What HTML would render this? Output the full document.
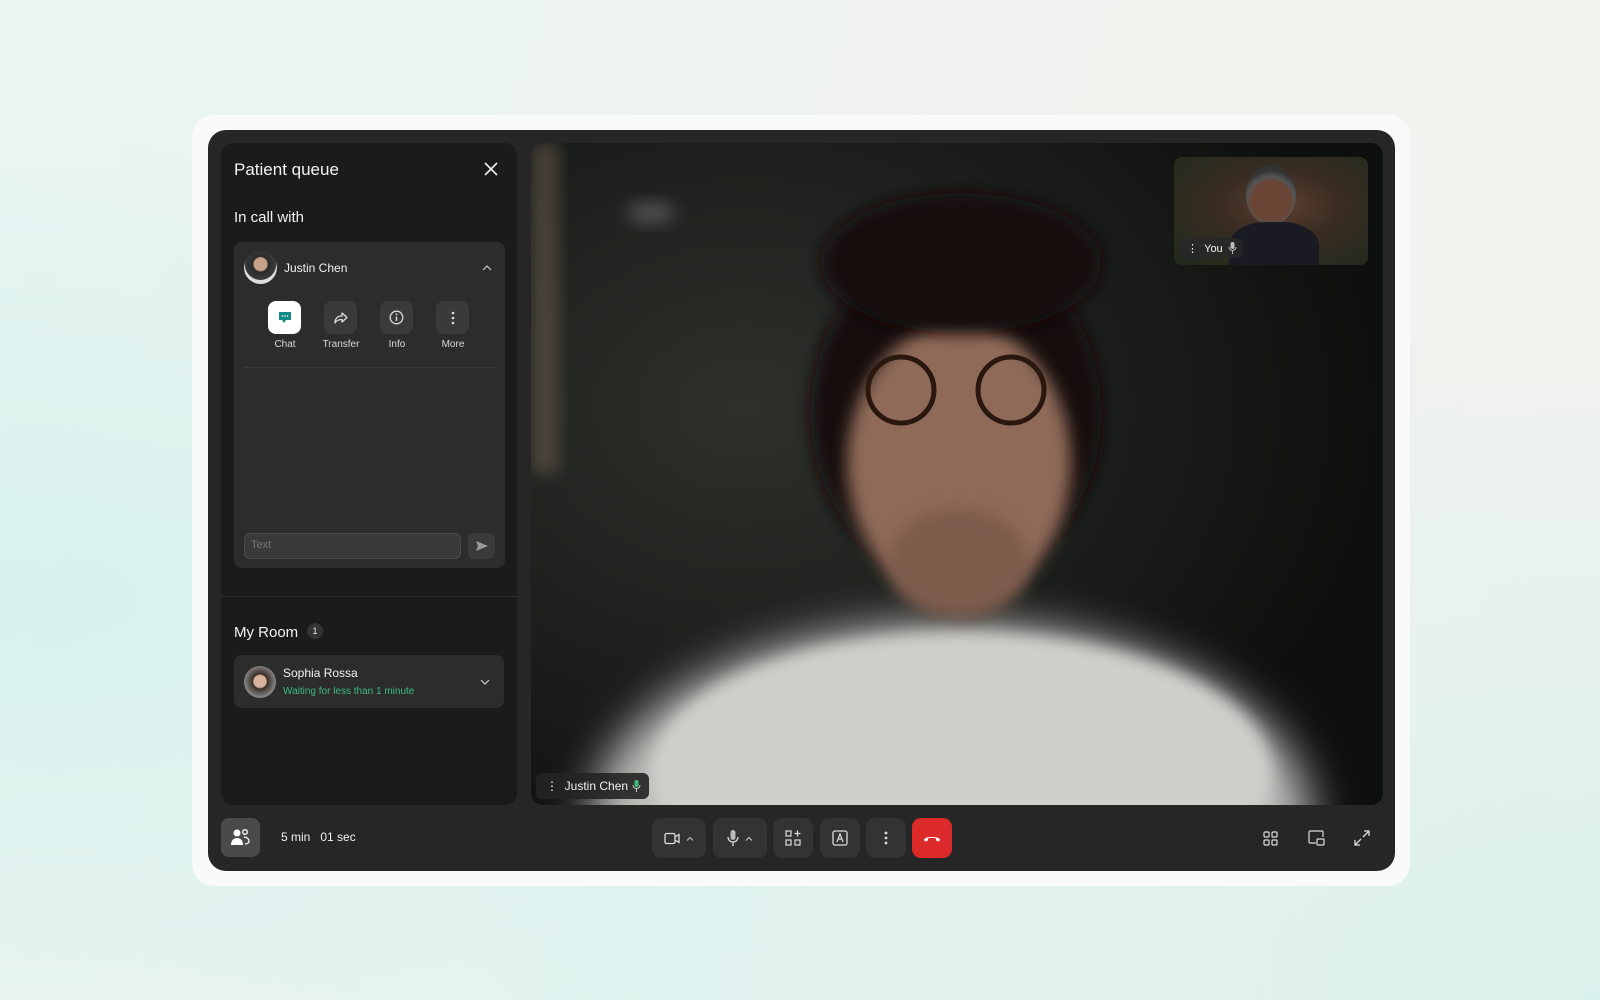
<!DOCTYPE html>
<html><head><meta charset="utf-8"><style>
*{box-sizing:border-box;margin:0;padding:0}
body{width:1600px;height:1000px;overflow:hidden;font-family:"Liberation Sans",sans-serif;background:radial-gradient(ellipse at 0% 60%,#d6f1ec 0,rgba(214,241,236,0) 55%),radial-gradient(ellipse at 100% 100%,#d9f1ec 0,rgba(217,241,236,0) 50%),radial-gradient(ellipse at 40% 100%,#e2f4f1 0,rgba(226,244,241,0) 50%),linear-gradient(110deg,#e8f5f3 0%,#f2f2ef 60%,#f3f2ee 100%);position:relative}
.abs{position:absolute}
.outer{left:192px;top:115px;width:1218px;height:771px;background:#f8fbfa;border-radius:22px}
.frame{left:208px;top:130px;width:1187px;height:741px;background:#262626;border-radius:18px;overflow:hidden}
.panel{left:221px;top:143px;width:296px;height:662px;background:#1b1b1b;border-radius:12px}
.t{color:#f2f2f2;position:absolute;white-space:nowrap}
.card{background:#2c2c2c;border-radius:8px;position:absolute}
.ab{position:absolute;width:33px;height:33px;border-radius:8px;background:#3a3a3a;display:flex;align-items:center;justify-content:center}
.lbl{position:absolute;font-size:10px;color:#d8d8d8;width:60px;text-align:center}
.tb{position:absolute;top:818px;height:40px;border-radius:9px;background:#333;display:flex;align-items:center;justify-content:center;gap:6px}
</style></head><body>
<div class="abs outer"></div>
<div class="abs frame"></div>
<div class="abs panel"></div>
<div class="t" style="left:234px;top:160px;font-size:17px">Patient queue</div>
<svg class="abs" style="left:484px;top:162px" width="14" height="14" viewBox="0 0 14 14"><path d="M1 1L13 13M13 1L1 13" stroke="#eee" stroke-width="1.6"/></svg>
<div class="t" style="left:234px;top:209px;font-size:15px">In call with</div>
<div class="card" style="left:234px;top:242px;width:271px;height:326px"></div>
<div class="abs" style="left:244px;top:251px;width:33px;height:33px;border-radius:50%;background:radial-gradient(circle at 50% 40%,#c9a088 0 25%,#2a2a2a 30%,#3b3b3b 60%,#ddd 62%)"></div>
<div class="t" style="left:284px;top:261px;font-size:12px">Justin Chen</div>
<svg class="abs" style="left:482px;top:264px" width="10" height="7"><path d="M1 6L5 2L9 6" stroke="#ccc" fill="none" stroke-width="1.2"/></svg>
<div class="ab" style="left:268px;top:301px;background:#fff"><svg width="14" height="13"><path d="M1 1h12v8H8l-2 3-2-3H1z" fill="#138a86"/><circle cx="4.5" cy="5" r=".8" fill="#fff"/><circle cx="7" cy="5" r=".8" fill="#fff"/><circle cx="9.5" cy="5" r=".8" fill="#fff"/></svg></div>
<div class="ab" style="left:324px;top:301px"><svg width="16" height="14"><path d="M9 2l5 4.5L9 11V8.5C5 8.5 3 10 2 12c0-4 2-7 7-7z" fill="none" stroke="#ddd" stroke-width="1.3" stroke-linejoin="round"/></svg></div>
<div class="ab" style="left:380px;top:301px"><svg width="15" height="15"><circle cx="7.5" cy="7.5" r="6.3" fill="none" stroke="#ddd" stroke-width="1.3"/><path d="M7.5 6.5v4.5" stroke="#ddd" stroke-width="1.4"/><circle cx="7.5" cy="4.3" r=".9" fill="#ddd"/></svg></div>
<div class="ab" style="left:436px;top:301px"><svg width="4" height="14"><circle cx="2" cy="2" r="1.3" fill="#ddd"/><circle cx="2" cy="7" r="1.3" fill="#ddd"/><circle cx="2" cy="12" r="1.3" fill="#ddd"/></svg></div>
<div class="lbl" style="left:255px;top:339px">Chat</div>
<div class="lbl" style="left:311px;top:339px">Transfer</div>
<div class="lbl" style="left:367px;top:339px">Info</div>
<div class="lbl" style="left:423px;top:339px">More</div>
<div class="abs" style="left:244px;top:367px;width:252px;height:1px;background:#3a3a3a"></div>
<div class="abs" style="left:244px;top:533px;width:217px;height:26px;border-radius:6px;background:#3a3a3a;border:1px solid #4a4a4a"></div>
<div class="t" style="left:251px;top:539px;font-size:11px;color:#777">Text</div>
<div class="abs" style="left:468px;top:533px;width:27px;height:26px;border-radius:6px;background:#3a3a3a"></div>
<svg class="abs" style="left:476px;top:541px" width="12" height="10"><path d="M0 0L12 5L0 10L2 5z" fill="#999"/></svg>
<div class="abs" style="left:221px;top:596px;width:296px;height:1px;background:#2c2c2c"></div>
<div class="t" style="left:234px;top:624px;font-size:15px">My Room</div>
<div class="abs" style="left:307px;top:623px;width:16px;height:16px;border-radius:50%;background:#333;color:#eee;font-size:9px;text-align:center;line-height:16px">1</div>
<div class="card" style="left:234px;top:655px;width:270px;height:53px"></div>
<div class="abs" style="left:244px;top:666px;width:32px;height:32px;border-radius:50%;background:radial-gradient(circle at 50% 48%,#d8b4a0 0 26%,#3a2e28 32%,#888 70%)"></div>
<div class="t" style="left:283px;top:666px;font-size:12px">Sophia Rossa</div>
<div class="t" style="left:283px;top:686px;font-size:10px;color:#3dbb7f">Waiting for less than 1 minute</div>
<svg class="abs" style="left:480px;top:679px" width="10" height="7"><path d="M1 1L5 5L9 1" stroke="#ccc" fill="none" stroke-width="1.2"/></svg>

<div class="abs" style="left:531px;top:143px;width:852px;height:662px;border-radius:12px;overflow:hidden;background:#151716">
<svg width="852" height="662" viewBox="0 0 852 662">
<defs><filter id="b" x="-50%" y="-50%" width="200%" height="200%"><feGaussianBlur stdDeviation="22"/></filter><filter id="b2" x="-30%" y="-30%" width="160%" height="160%"><feGaussianBlur stdDeviation="8"/></filter>
<radialGradient id="bg" cx="25%" cy="40%" r="75%"><stop offset="0" stop-color="#2e302b"/><stop offset="1" stop-color="#0e100f"/></radialGradient></defs>
<rect width="852" height="662" fill="url(#bg)"/>
<rect x="0" y="0" width="28" height="330" fill="#7a6a5a" opacity=".45" filter="url(#b2)"/>
<ellipse cx="120" cy="70" rx="25" ry="12" fill="#999" opacity=".35" filter="url(#b2)"/>
<ellipse cx="420" cy="680" rx="360" ry="200" fill="#bdbdba" filter="url(#b)"/>
<ellipse cx="430" cy="630" rx="310" ry="140" fill="#cfcfcb" filter="url(#b2)"/>
<ellipse cx="425" cy="270" rx="145" ry="170" fill="#17110e" filter="url(#b2)"/>
<ellipse cx="428" cy="320" rx="112" ry="140" fill="#8f6a58" filter="url(#b2)"/>
<ellipse cx="428" cy="420" rx="70" ry="55" fill="#7d5c4c" filter="url(#b2)"/>
<ellipse cx="430" cy="120" rx="140" ry="70" fill="#120e0c" filter="url(#b2)"/>
<circle cx="370" cy="247" r="33" fill="none" stroke="#2a170e" stroke-width="5"/>
<circle cx="480" cy="247" r="33" fill="none" stroke="#2a170e" stroke-width="5"/>
</svg>
</div>
<div class="abs" style="left:1174px;top:157px;width:194px;height:108px;border-radius:8px;overflow:hidden;background:radial-gradient(ellipse at 55% 45%,#5c4030 0,#3a2c22 40%,#1f2a1c 100%)">
<div class="abs" style="left:72px;top:8px;width:50px;height:60px;border-radius:50%;background:radial-gradient(circle at 50% 60%,#6a4535 0 45%,#555 55%,#333 70%)"></div>
<div class="abs" style="left:55px;top:65px;width:90px;height:60px;border-radius:40% 40% 0 0;background:#1a1a22"></div>
</div>
<div class="abs" style="left:1179px;top:238px;width:64px;height:20px;border-radius:6px;background:rgba(40,40,40,.85)"></div>
<div class="t" style="left:1187px;top:242px;font-size:11px">⋮ &nbsp;You</div>
<svg class="abs" style="left:1228px;top:242px" width="9" height="12"><rect x="2.5" y="0" width="4" height="7" rx="2" fill="#bbb"/><path d="M1 5a3.5 3.5 0 007 0M4.5 9v3" stroke="#bbb" fill="none"/></svg>
<div class="abs" style="left:536px;top:773px;width:113px;height:26px;border-radius:6px;background:rgba(35,35,35,.9)"></div>
<div class="t" style="left:546px;top:779px;font-size:12px">⋮ &nbsp;Justin Chen</div>
<svg class="abs" style="left:632px;top:780px" width="9" height="12"><rect x="2.5" y="0" width="4" height="7" rx="2" fill="#3dbb7f"/><path d="M1 5a3.5 3.5 0 007 0M4.5 9v3" stroke="#ccc" fill="none"/></svg>

<div class="abs" style="left:221px;top:818px;width:39px;height:39px;border-radius:8px;background:#4a4a4a"></div>
<svg class="abs" style="left:231px;top:828px" width="20" height="18"><circle cx="6" cy="5" r="3.5" fill="#fff"/><path d="M0 17c0-5 3-7 6-7s6 2 6 7z" fill="#fff"/><circle cx="14" cy="4" r="2.3" fill="none" stroke="#fff" stroke-width="1.3"/><path d="M13 9c3 0 5 2 5 4s-2 3-4 3" fill="none" stroke="#fff" stroke-width="1.3"/></svg>
<div class="t" style="left:281px;top:830px;font-size:12px">5 min &nbsp; 01 sec</div>

<div class="tb" style="left:652px;width:54px"><svg width="16" height="13"><rect x="1" y="1.5" width="10" height="10" rx="1.5" fill="none" stroke="#ddd" stroke-width="1.3"/><path d="M11 5l4-2.5v8L11 8" fill="none" stroke="#ddd" stroke-width="1.3"/></svg><svg width="8" height="5"><path d="M1 4.5L4 1.5L7 4.5" stroke="#ccc" fill="none"/></svg></div>
<div class="tb" style="left:713px;width:54px"><svg width="12" height="16"><rect x="3.5" y="0" width="5" height="10" rx="2.5" fill="#bbb"/><path d="M1 7a5 5 0 0010 0M6 12v4" stroke="#ddd" fill="none" stroke-width="1.3"/></svg><svg width="8" height="5"><path d="M1 4.5L4 1.5L7 4.5" stroke="#ccc" fill="none"/></svg></div>
<div class="tb" style="left:773px;width:40px"><svg width="16" height="16"><rect x="1" y="1" width="5" height="5" fill="none" stroke="#ddd" stroke-width="1.2"/><rect x="1" y="10" width="5" height="5" fill="none" stroke="#ddd" stroke-width="1.2"/><rect x="10" y="10" width="5" height="5" fill="none" stroke="#ddd" stroke-width="1.2"/><path d="M12.5 0.5v6M9.5 3.5h6" stroke="#ddd" stroke-width="1.2"/></svg></div>
<div class="tb" style="left:820px;width:40px"><svg width="16" height="16"><rect x="1" y="1" width="14" height="14" rx="2" fill="none" stroke="#ddd" stroke-width="1.3"/><path d="M5 12L8 4L11 12M6.2 9h3.6" stroke="#ddd" fill="none" stroke-width="1.2"/></svg></div>
<div class="tb" style="left:866px;width:40px"><svg width="4" height="14"><circle cx="2" cy="2" r="1.4" fill="#ddd"/><circle cx="2" cy="7" r="1.4" fill="#ddd"/><circle cx="2" cy="12" r="1.4" fill="#ddd"/></svg></div>
<div class="tb" style="left:912px;width:40px;background:#dc2a2a"><svg width="18" height="8"><path d="M1 6c0-4 16-4 16 0l-1 1.5-3-1V4.5c-2-.8-6-.8-8 0V6.5l-3 1z" fill="#fff"/></svg></div>

<svg class="abs" style="left:1263px;top:831px" width="15" height="15"><g fill="none" stroke="#ddd" stroke-width="1.2"><rect x="1" y="1" width="5" height="5" rx="1"/><rect x="9" y="1" width="5" height="5" rx="1"/><rect x="1" y="9" width="5" height="5" rx="1"/><rect x="9" y="9" width="5" height="5" rx="1"/></g></svg>
<svg class="abs" style="left:1308px;top:830px" width="17" height="16"><g fill="none" stroke="#ddd" stroke-width="1.2"><path d="M8 13H2a1 1 0 01-1-1V2a1 1 0 011-1h12a1 1 0 011 1v5"/><rect x="9" y="9" width="7" height="6" rx="1"/></g></svg>
<svg class="abs" style="left:1354px;top:830px" width="16" height="16"><g fill="none" stroke="#ddd" stroke-width="1.3"><path d="M9 7l6-6M10 1h5v5M7 9l-6 6M1 10v5h5"/></g></svg>
</body></html>
